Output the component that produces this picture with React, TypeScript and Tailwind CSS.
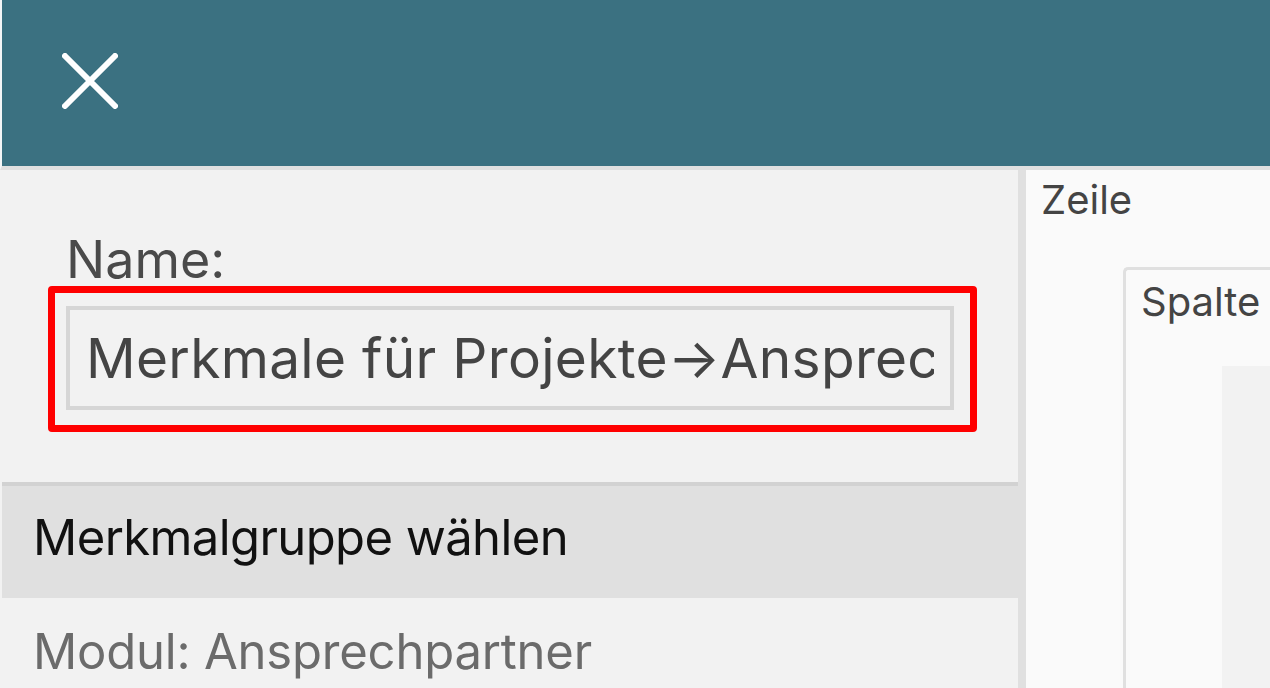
const CloseIcon = () => (
  <svg width="56" height="56" viewBox="0 0 56 56" fill="none">
    <path d="M3 3L53 53M53 3L3 53" stroke="white" strokeWidth="6" strokeLinecap="round" />
  </svg>
);

const App = () => {
  return (
    <div
      className="w-[1270px] h-[688px] overflow-hidden flex flex-col bg-[#f2f2f2]"
      style={{ fontFamily: 'Inter, "Noto Sans", sans-serif' }}
    >
      <header className="h-[170px] shrink-0 bg-[#3b7181] border-b-[4px] border-[#e0e0e0] border-l-2 border-l-[#f4f6f7] flex items-start pl-[60px] pt-[53px]">
        <button type="button" aria-label="Schließen" className="w-[56px] h-[56px]">
          <CloseIcon />
        </button>
      </header>

      <div className="flex-1 flex min-h-0">
        {/* left panel */}
        <div className="w-[1018px] shrink-0 pl-[2px] bg-[#f2f2f2] flex flex-col">
          <div className="pt-[64px] pl-[64px] text-[52px] leading-[52px] text-[#4a4a4a]">Name:</div>
          <div className="ml-[46px] w-[929px] h-[146px] border-[7px] border-[#ff0000] rounded-[4px] pt-[13px] pl-[11px] pr-[16px]">
            <input
              readOnly
              value="Merkmale für Projekte→Ansprechpartner"
              className="w-full h-[104px] border-[4px] border-[#d6d6d6] bg-[#f2f2f2] pl-[16px] pr-[16px] text-[55px] tracking-[0.3px] text-[#444] outline-none"
              style={{ fontFamily: 'Inter, "Noto Sans", sans-serif' }}
            />
          </div>
          <div className="mt-[50px] h-[116px] border-t-[4px] border-[#d2d2d2] bg-[#e0e0e0] pt-[27px] pl-[31px] text-[49px] leading-[50px] tracking-[-0.6px] text-[#111]">
            Merkmalgruppe wählen
          </div>
          <div className="mt-[29px] pl-[31px] text-[49px] leading-[50px] tracking-[-0.2px] text-[#6b6b6b]">
            Modul: Ansprechpartner
          </div>
        </div>

        {/* divider */}
        <div className="w-[8px] shrink-0 bg-[#e0e0e0]" />

        {/* right panel */}
        <div className="flex-1 bg-[#fafafa] pt-[10px] flex flex-col">
          <div className="pl-[15px] text-[40px] leading-[40px] text-[#444]">Zeile</div>
          <div className="mt-[47px] ml-[97px] flex-1 border-t-[3px] border-l-[3px] border-[#e0e0e0] rounded-tl-[5px] bg-[#fafafa] pt-[12px] flex flex-col">
            <div className="pl-[15px] text-[40px] leading-[40px] text-[#444]">Spalte</div>
            <div className="mt-[44px] ml-[96px] flex-1 bg-[#f2f2f2]" />
          </div>
        </div>
      </div>
    </div>
  );
};

export default App;
